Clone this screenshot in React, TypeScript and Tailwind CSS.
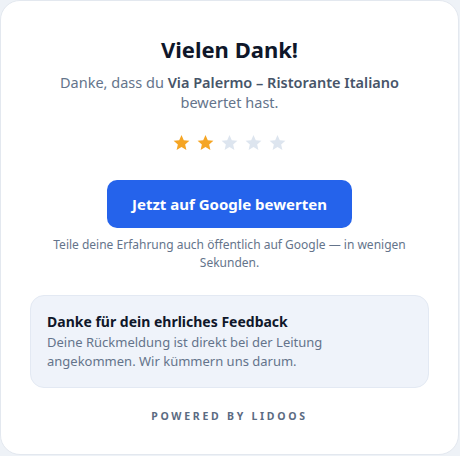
import React from 'react';

const Star = ({ filled }: { filled: boolean }) => (
  <svg viewBox="0 0 24 24" className="h-[19px] w-[19px]" fill={filled ? '#f5a524' : '#dde5ef'}>
    <path d="M12 2.5l2.9 6.6 7.1.6-5.4 4.7 1.6 7-6.2-3.7-6.2 3.7 1.6-7L2 9.7l7.1-.6z" />
  </svg>
);

const App: React.FC = () => {
  const rating = 2;

  return (
    <div
      className="min-h-screen bg-[#eef2f7]"
      style={{ fontFamily: '"Noto Sans", "Open Sans", Arial, sans-serif' }}
    >
      <div className="flex h-[455px] w-[459px] flex-col items-center rounded-[20px] border border-[#e3e8ef] bg-white px-[29px] pt-[33px]">
        {/* Header */}
        <h1 className="text-[22px] font-bold leading-[30px] text-[#0f172a]">Vielen Dank!</h1>
        <p className="mt-[8px] text-center text-[14.5px] leading-[20px] text-[#64748b]">
          Danke, dass du{' '}
          <span className="font-semibold text-[#475569]">Via Palermo – Ristorante Italiano</span>
          <br />
          bewertet hast.
        </p>

        {/* Stars */}
        <div className="mt-[21px] flex items-center gap-[5px]">
          {[1, 2, 3, 4, 5].map((i) => (
            <Star key={i} filled={i <= rating} />
          ))}
        </div>

        {/* CTA */}
        <button className="mt-[28px] h-[48px] w-[245px] rounded-[10px] bg-[#2563eb] text-[15px] font-bold text-white">
          Jetzt auf Google bewerten
        </button>
        <p className="mt-[8px] text-center text-[12px] leading-[18px] text-[#64748b]">
          Teile deine Erfahrung auch öffentlich auf Google — in wenigen
          <br />
          Sekunden.
        </p>

        {/* Feedback note */}
        <div className="mt-[23px] w-full rounded-[14px] border border-[#e3e9f3] bg-[#eff3fa] px-[16px] py-[16px]">
          <h2 className="text-[14px] font-bold leading-[20px] text-[#0f172a]">
            Danke für dein ehrliches Feedback
          </h2>
          <p className="mt-[1px] text-[13px] leading-[19px] text-[#64748b]">
            Deine Rückmeldung ist direkt bei der Leitung
            <br />
            angekommen. Wir kümmern uns darum.
          </p>
        </div>

        <div className="mt-[21px] text-[10.5px] font-bold tracking-[0.26em] text-[#5b6b82]">
          POWERED BY LIDOOS
        </div>
      </div>
    </div>
  );
};

export default App;
